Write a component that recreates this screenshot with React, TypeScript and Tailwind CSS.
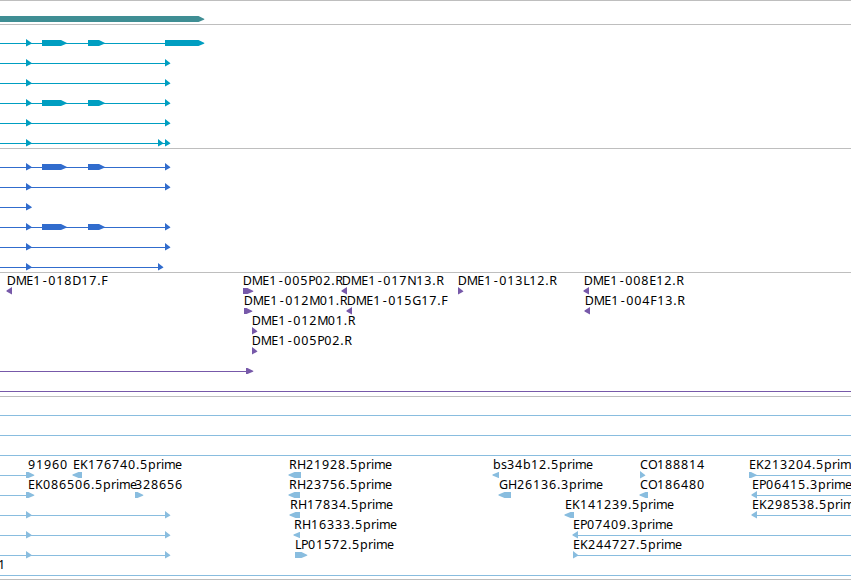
import React from 'react';

type Direction = 'right' | 'left';

interface Label {
  text: string;
  x: number;
}

interface Row {
  line?: [number, number];
  // start, end, direction (right when left out)
  blocks?: [number, number, Direction?][];
  labels?: Label[];
}

interface TrackData {
  name: string;
  color: string;
  height: number;
  rows: Row[];
}

const WIDTH = 851;
const ROW_HEIGHT = 20;

// Pixel advances for the track labels, digits are 8 wide
const ADVANCES: Record<string, number> = {
  D: 9, M: 10.5, E: 7, F: 7, R: 8, P: 7, N: 9, G: 9, H: 9, L: 6, K: 8, C: 8, O: 9,
  '-': 7, '.': 4, p: 8, r: 5, i: 3, m: 11, e: 7, b: 8, s: 6,
};

const full: [number, number] = [0, WIDTH];

const exons: Row = { line: [0, 165], blocks: [[26, 32], [42, 67], [88, 105], [165, 170.5]] };
const plain: Row = { line: [0, 165], blocks: [[26, 32], [165, 170.5]] };

const tracks: TrackData[] = [
  {
    name: 'gene',
    color: '#3f8e94',
    height: 24,
    rows: [{ blocks: [[-10, 204.5]] }],
  },
  {
    name: 'transcripts',
    color: '#009ec1',
    height: 124,
    rows: [
      { line: [0, 165], blocks: [[26, 32], [42, 67], [88, 105], [165, 204.5]] },
      plain,
      plain,
      exons,
      plain,
      { line: [0, 165], blocks: [[26, 32], [158, 163.5], [165, 170.5]] },
    ],
  },
  {
    name: 'cds',
    color: '#316ccd',
    height: 124,
    rows: [
      exons,
      plain,
      { line: [0, 26], blocks: [[26, 32]] },
      exons,
      plain,
      { line: [0, 158], blocks: [[26, 32], [158, 163.5]] },
    ],
  },
  {
    name: 'bac-ends',
    color: '#7759a9',
    height: 124,
    rows: [
      {
        blocks: [[6.5, 12, 'left'], [243, 253.5], [341.5, 347, 'left'], [458, 463.5], [583.5, 589, 'left']],
        labels: [
          { text: 'DME1-018D17.F', x: 6.7 },
          { text: 'DME1-005P02.R', x: 242.7 },
          { text: 'DME1-017N13.R', x: 341.7 },
          { text: 'DME1-013L12.R', x: 457.7 },
          { text: 'DME1-008E12.R', x: 583.7 },
        ],
      },
      {
        blocks: [[244, 252.5], [346.5, 352, 'left'], [584.5, 590, 'left']],
        labels: [
          { text: 'DME1-012M01.R', x: 243.7 },
          { text: 'DME1-015G17.F', x: 346.7 },
          { text: 'DME1-004F13.R', x: 584.7 },
        ],
      },
      { blocks: [[252, 257.5]], labels: [{ text: 'DME1-012M01.R', x: 251.7 }] },
      { blocks: [[252, 257.5]], labels: [{ text: 'DME1-005P02.R', x: 251.7 }] },
      { line: [0, 246], blocks: [[246, 253.5]] },
      { line: full },
    ],
  },
  {
    name: 'ests',
    color: '#89bddf',
    height: 183,
    rows: [
      { line: full },
      { line: full },
      { line: full },
      {
        line: [0, 26],
        blocks: [[26, 34.5], [72.5, 82, 'left'], [288.5, 301, 'left'], [492.5, 499, 'left'], [640, 645.5], [749, 757]],
        labels: [
          { text: '91960', x: 28 },
          { text: 'EK176740.5prime', x: 73 },
          { text: 'RH21928.5prime', x: 289 },
          { text: 'bs34b12.5prime', x: 493 },
          { text: 'CO188814', x: 640 },
          { text: 'EK213204.5prime', x: 749 },
        ],
      },
      {
        line: [0, 26],
        blocks: [[26, 34.5], [135, 143.5], [288.5, 300, 'left'], [498.5, 511, 'left'], [639.5, 648, 'left'], [751.5, 757, 'left']],
        labels: [
          { text: 'EK086506.5prime', x: 28 },
          { text: '328656', x: 135 },
          { text: 'RH23756.5prime', x: 289 },
          { text: 'GH26136.3prime', x: 499 },
          { text: 'CO186480', x: 640 },
          { text: 'EP06415.3prime', x: 752 },
        ],
      },
      {
        line: [0, 165],
        blocks: [[26, 32], [165, 170.5], [289.5, 300, 'left'], [564.5, 574, 'left'], [751.5, 757, 'left']],
        labels: [
          { text: 'RH17834.5prime', x: 290 },
          { text: 'EK141239.5prime', x: 565 },
          { text: 'EK298538.5prime', x: 752 },
        ],
      },
      {
        line: [0, 165],
        blocks: [[26, 32], [165, 170.5], [293.5, 300, 'left'], [572.5, 578, 'left']],
        labels: [
          { text: 'RH16333.5prime', x: 294 },
          { text: 'EP07409.3prime', x: 573 },
        ],
      },
      {
        line: [0, 165],
        blocks: [[26, 32], [165, 170.5], [295, 307.5], [573, 578.5]],
        labels: [
          { text: 'LP01572.5prime', x: 295 },
          { text: 'EK244727.5prime', x: 573 },
        ],
      },
      { line: full, labels: [{ text: '1', x: -2 }] },
    ],
  },
];

// Reads that run on past the right edge, by row of the EST track
const trailing: Record<number, number> = { 3: 755, 4: 757, 5: 757, 6: 578, 7: 577 };

const arrowPoints = (x1: number, x2: number, y: number, dir: Direction) => {
  const head = Math.min(x2 - x1, 6);
  // bare arrow heads are a little taller than the exon boxes
  const top = x2 - x1 <= 6 ? y - 4 : y - 3;
  const bottom = x2 - x1 <= 6 ? y + 3.5 : y + 3;
  return dir === 'right'
    ? `${x1},${top} ${x2 - head},${top} ${x2 - 1},${y - 0.5} ${x2},${y + 0.5} ${x2 - head},${bottom} ${x1},${bottom}`
    : `${x2},${top} ${x1 + head},${top} ${x1},${y - 0.5} ${x1},${y + 0.5} ${x1 + head},${bottom} ${x2},${bottom}`;
};

const glyphPositions = ({ text, x }: Label) => {
  let pos = x;
  return text
    .split('')
    .map((char) => {
      const current = char === '-' ? pos + 1.5 : pos;
      pos += ADVANCES[char] ?? 8;
      return current;
    })
    .join(' ');
};

const Track: React.FC<{ track: TrackData }> = ({ track }) => (
  <section className="border-t border-[#bebebe]" style={{ height: track.height }}>
    <svg width={WIDTH} height={track.height - 1} className="block" fill={track.color}>
      {track.rows.map((row, i) => {
        const top = i * ROW_HEIGHT;
        const tail = track.name === 'ests' ? trailing[i] : undefined;
        return (
          <g key={i}>
            {row.line && <rect x={row.line[0]} y={top + 18} width={row.line[1] - row.line[0]} height={1} />}
            {tail && <rect x={tail} y={top + 18} width={WIDTH - tail} height={1} />}
            {row.blocks?.map(([x1, x2, dir = 'right']) => (
              <polygon key={x1} points={arrowPoints(x1, x2, top + 18, dir)} />
            ))}
            {row.labels?.map((label) => (
              <text
                key={label.x}
                x={glyphPositions(label)}
                y={top + 12}
                className="fill-black font-['Noto_Sans',sans-serif] text-[12.5px]"
              >
                {label.text}
              </text>
            ))}
          </g>
        );
      })}
    </svg>
  </section>
);

export default function App() {
  return (
    <main className="h-[580px] w-[851px] overflow-hidden bg-white">
      {tracks.map((track) => (
        <Track key={track.name} track={track} />
      ))}
      <div className="h-px bg-[#bebebe]" />
    </main>
  );
}
